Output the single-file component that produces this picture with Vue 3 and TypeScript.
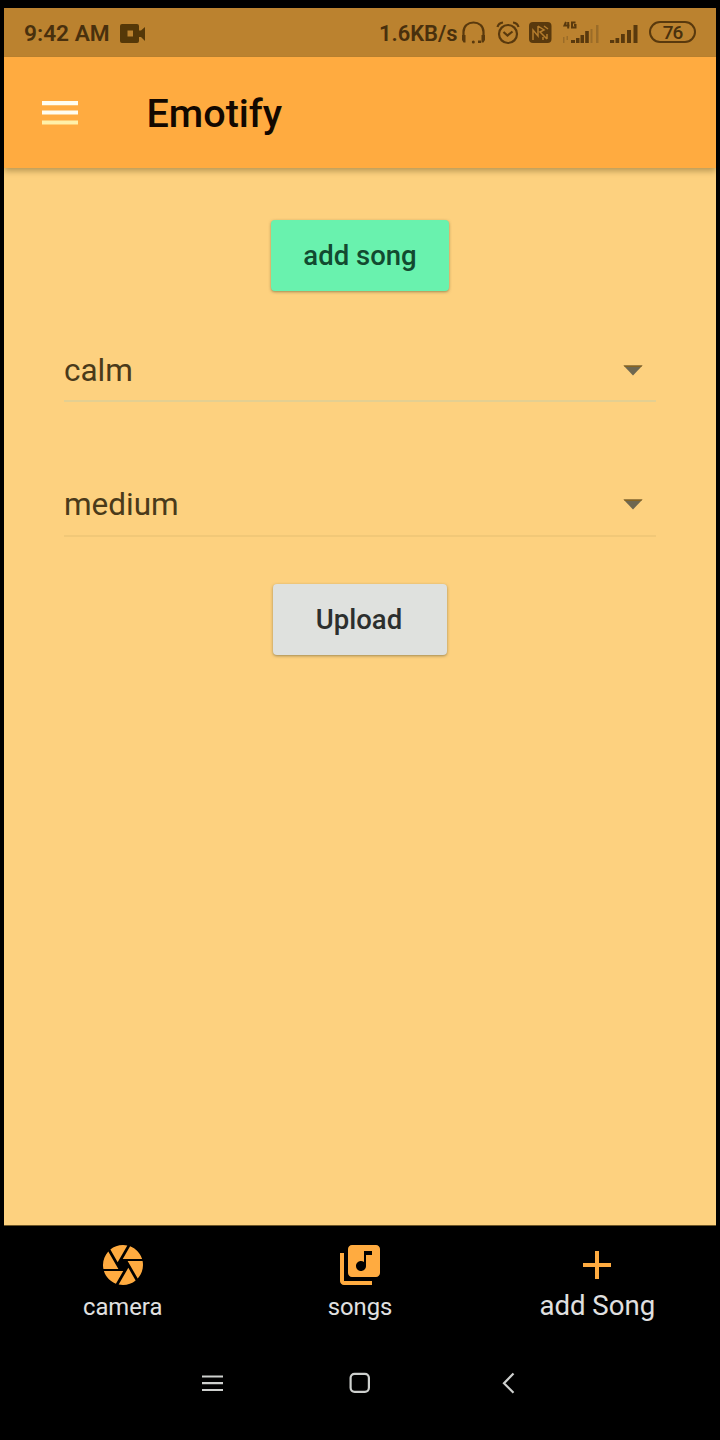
<script setup lang="ts">
interface Field { id: string; value: string }
interface Tab { id: 'camera' | 'songs' | 'add'; label: string; active: boolean }

const fields: Field[] = [
  { id: 'mood', value: 'calm' },
  { id: 'tempo', value: 'medium' },
]
const tabs: Tab[] = [
  { id: 'camera', label: 'camera', active: false },
  { id: 'songs', label: 'songs', active: false },
  { id: 'add', label: 'add Song', active: true },
]
</script>

<template>
  <div class="device">
    <div class="app">
      <div class="status">
        <span class="clock">9:42 AM</span>
        <svg class="rec" width="27" height="22" viewBox="0 0 27 22">
          <path fill-rule="evenodd" d="M2 1h15q2 0 2 2v4.500l2 0 4-3.500v14l-4-4-2 0V18q0 2-2 2H2q-2 0-2-2V3q0-2 2-2zM7.500 7.500v6h5.500v-6z" />
        </svg>
        <span class="speed">1.6KB/s</span>
        <svg class="phones" width="25" height="24" viewBox="0 0 25 24">
          <path class="line" d="M2.500 17V11C2.500 5 7 1.500 12.500 1.500S22.500 5 22.500 11v6" />
          <path d="M1 14h3.500v7.500H2.500L1 19zM20.500 14H24v5l-1.500 2.500h-2z" />
          <circle cx="12.300" cy="21" r="1.500" /><path d="M17 19.500h3v2.500h-3z" />
        </svg>
        <svg class="alarm" width="24" height="24" viewBox="0 0 24 24">
          <circle class="line" cx="12" cy="13" r="9" />
          <path class="line" d="M7.500 11l4 3.500 5-4M1.500 6q1-4 5.500-4.500M22.500 6q-1-4-5.500-4.500" />
        </svg>
        <svg class="nfc" width="23" height="22" viewBox="0 0 23 22">
          <rect width="22.500" height="21" rx="4" />
          <path class="cut" d="M4 18V8l5 6V4M9 4l6 4-4 2 7 7M15 4l4 3M14 18v-3M18 12v5" />
        </svg>
        <svg class="cell4g" width="38" height="24" viewBox="0 0 38 24">
          <path d="M4 1L2.500 4.500H7.500M6.200 1V7.500M13.500 1.500H10v5h3.500V4H12" fill="none" stroke="#59390d" stroke-width="2" />
          <path d="M9 19h4v3H9zM14 17h3.500v5H14zM18.500 14h3.500v8h-3.500zM23.200 10h3.600v12h-3.600z" />
          <path class="dim" d="M28.500 8h2v14h-2zM34 4h2.500v18H34zM1 16h1.500v6H1zM4.500 15H6v4H4.500z" />
        </svg>
        <svg class="cell" width="30" height="24" viewBox="0 0 30 24">
          <path d="M1 19h4.200v3H1zM6.500 17h3.700v5H6.500zM12 13h3.800v9H12zM18 9h4v13h-4zM24.500 4h4v18h-4z" />
        </svg>
        <span class="battery">76</span>
      </div>

      <header class="bar">
        <svg width="38" height="28" viewBox="0 0 38 28">
          <path fill="#fffdf0" d="M1 2h36v4.200H1zM1 11.400h36v4.200H1z" />
          <path fill="#fff0a8" d="M1 21.400h36v4.200H1z" />
        </svg>
        <h1>Emotify</h1>
      </header>

      <main>
        <button class="btn add">add song</button>
        <div v-for="f in fields" :key="f.id" class="field" :class="f.id">
          <span>{{ f.value }}</span>
          <svg width="20" height="11" viewBox="0 0 20 11"><path fill="#6e6750" d="M.500.500h19L10 10.500z" /><path fill="#876420" d="M.500.500h19l-1.500 1.600H2z" /></svg>
        </div>
        <button class="btn upload">Upload</button>
      </main>

      <nav class="tabs">
        <div v-for="t in tabs" :key="t.id" class="tab" :class="{ active: t.active }">
          <svg v-if="t.id === 'camera'" width="48" height="48" viewBox="0 0 24 24">
            <path d="M9.400 10.500l4.770-8.260C13.470 2.090 12.750 2 12 2c-2.400 0-4.600.85-6.320 2.250l3.660 6.350.06-.1zM21.540 9c-.92-2.920-3.150-5.260-6-6.340L11.880 9h9.660zm.26 1h-7.490l.29.500 4.760 8.250C21 16.970 22 14.610 22 12c0-.69-.07-1.350-.2-2zM8.540 12l-3.900-6.750C3.010 7.030 2 9.390 2 12c0 .69.07 1.350.2 2h7.490l-1.150-2zm-6.080 3c.92 2.920 3.150 5.260 6 6.340L12.120 15H2.460zm11.270 0l-3.900 6.760c.7.150 1.420.24 2.170.24 2.400 0 4.600-.85 6.320-2.250l-3.660-6.350-.93 1.600z" />
          </svg>
          <svg v-else-if="t.id === 'songs'" width="48" height="48" viewBox="0 0 24 24">
            <path d="M20 2H8c-1.100 0-2 .9-2 2v12c0 1.100.9 2 2 2h12c1.100 0 2-.9 2-2V4c0-1.100-.9-2-2-2zm-2 5h-3v5.500c0 1.380-1.120 2.500-2.500 2.500S10 13.880 10 12.500s1.120-2.500 2.500-2.500c.57 0 1.080.19 1.500.51V5h4v2zM4 6H2v14c0 1.100.9 2 2 2h14v-2H4V6z" />
          </svg>
          <svg v-else width="48" height="48" viewBox="0 0 24 24">
            <path d="M19 13h-6v6h-2v-6H5v-2h6V5h2v6h6v2z" />
          </svg>
          <span>{{ t.label }}</span>
        </div>
      </nav>
    </div>

    <div class="system">
      <svg width="24" height="24" viewBox="0 0 24 24"><path d="M2 5.500h21M2 12.200h21M2 19h21" /></svg>
      <svg width="24" height="24" viewBox="0 0 24 24"><rect x="2.600" y="2.800" width="18.300" height="18" rx="4" /></svg>
      <svg width="24" height="24" viewBox="0 0 24 24"><path d="M17.500 2.500L8 12.200l9.500 9.500" /></svg>
    </div>
  </div>
</template>

<style>
body { margin: 0; background: #000; }
</style>

<style scoped>
.device {
  box-sizing: border-box;
  width: 720px;
  height: 1440px;
  padding: 8px 4px 0;
  background: #000;
  font-family: Roboto, "Liberation Sans", sans-serif;
  overflow: hidden;
}
.app {
  display: flex;
  flex-direction: column;
  height: 1328px;
}
.status {
  display: flex;
  align-items: center;
  height: 48.500px;
  padding: 0 20px;
  background: #bb822f;
  color: #49300d;
  font-size: 22.700px;
  font-weight: 600;
  white-space: nowrap;
}
.status svg { fill: #59390d; flex: none; margin-top: 2px; }
.status .line { fill: none; stroke: #59390d; stroke-width: 2.200; }
.status .cut { fill: none; stroke: #b37c2d; stroke-width: 1.500; }
.status .dim { fill: #9b6c28; }
.clock { width: 96px; padding-top: 3px; }
.status .rec { fill: #553808; margin-top: 3px; }
.speed { margin-left: auto; width: 82px; padding-top: 3px; font-size: 21.900px; }
.alarm { margin-left: 10px; }
.nfc { margin-left: 9px; }
.cell4g { margin-left: 10px; }
.cell { margin-left: 9px; }
.battery {
  box-sizing: border-box;
  width: 47px;
  height: 22px;
  margin-left: 10px;
  border: 2px solid #59390d;
  border-radius: 11px;
  font-size: 19px;
  font-weight: 500;
  line-height: 19px;
  letter-spacing: -1px;
  text-align: center;
}
.bar {
  position: relative;
  display: flex;
  align-items: center;
  flex: none;
  height: 111.500px;
  padding-left: 37px;
  background: #ffab40;
  box-shadow: 0 3px 6px rgba(80, 65, 20, .4);
  clip-path: inset(0 0 -14px 0);
}
.bar svg { margin-top: 2px; }
.bar h1 {
  margin: 3px 0 0 67.500px;
  color: #120800;
  font-size: 39.500px;
  font-weight: 500;
}
main {
  display: flex;
  flex: 1;
  flex-direction: column;
  align-items: center;
  background: #fdd17f;
}
.btn {
  flex: none;
  height: 71px;
  padding: 0;
  border: 0;
  border-radius: 4px;
  font-family: inherit;
  font-size: 27.500px;
  font-weight: 500;
  box-shadow: 0 1px 3px rgba(70, 65, 40, .5);
}
.add { width: 178px; margin-top: 52px; background: #69f2ae; color: #124a30; }
.upload { width: 173.500px; margin-top: 47px; padding-right: 2px; background: #dfe1de; color: #2c2f2e; }
.field {
  box-sizing: border-box;
  display: flex;
  align-items: center;
  justify-content: space-between;
  flex: none;
  width: 592px;
  height: 62px;
  padding-right: 13.500px;
  border-bottom: 2px solid #e4cf91;
  color: #4a3a1a;
  font-size: 31.500px;
}
.mood { margin-top: 48.500px; padding-top: 2px; }
.tempo { margin-top: 73px; border-bottom-color: #f1c878; }
.tabs {
  display: flex;
  flex: none;
  height: 110px;
  border-top: 1px solid #6b5426;
  background: #000;
  color: #e0e0e0;
}
.tab {
  display: flex;
  flex: 1;
  flex-direction: column;
  align-items: center;
  padding-top: 15px;
  font-size: 23.800px;
}
.tab svg { fill: #ffab40; }
.tab span { line-height: 32px; margin-top: 2px; }
.tab.active { font-size: 27.600px; }
.tab.active span { margin-top: 1px; }
.system {
  display: flex;
  justify-content: center;
  gap: 124px;
  padding-top: 35px;
}
.system svg { fill: none; stroke: #ced0ce; stroke-width: 2.200; }
</style>
